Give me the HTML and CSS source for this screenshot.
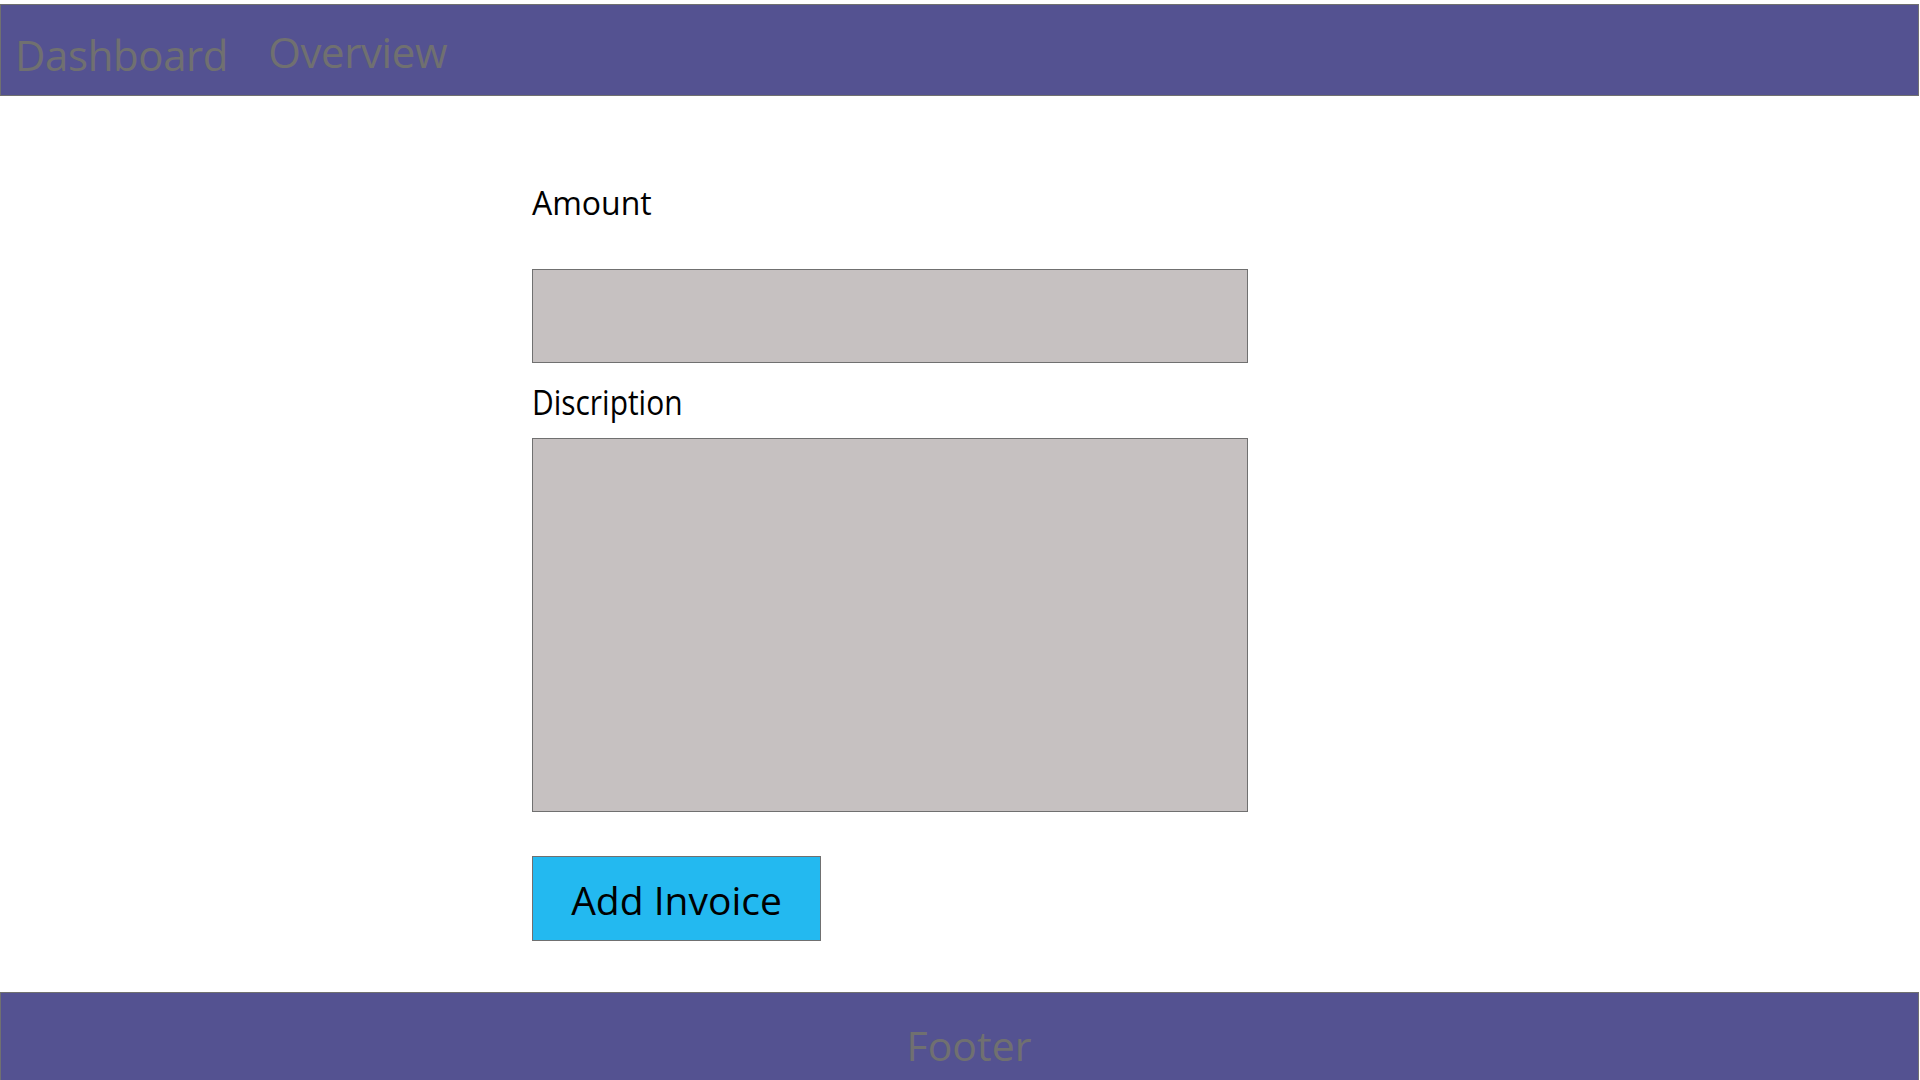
FILE: index.html
```html
<!DOCTYPE html>
<html lang="en">
<head>
<meta charset="utf-8">
<title>Add Invoice</title>
<link rel="stylesheet" href="styles.css">
</head>
<body>
<header class="topbar">
  <a class="nav-link nav-dashboard">Dashboard</a>
  <a class="nav-link nav-overview">Overview</a>
</header>
<main class="content">
  <form class="invoice-form">
    <label class="field-label label-amount">Amount</label>
    <div class="field field-amount"></div>
    <label class="field-label label-desc"><span class="narrow">Discription</span></label>
    <div class="field field-desc"></div>
    <button type="button" class="add-btn">Add Invoice</button>
  </form>
</main>
<footer class="footer">
  <span class="footer-text">Footer</span>
</footer>
</body>
</html>
```

FILE: styles.css
```css
html, body {
  margin: 0;
  padding: 0;
}
body {
  height: 1080px;
  overflow: hidden;
  display: flex;
  flex-direction: column;
  background: #ffffff;
  font-family: "Open Sans", "Noto Sans", sans-serif;
}
.topbar {
  margin-top: 4px;
  width: 1919px;
  height: 92px;
  box-sizing: border-box;
  border: 1px solid #707070;
  background: #545291;
  display: flex;
  align-items: flex-start;
  padding-left: 14px;
  flex-shrink: 0;
}
.nav-link {
  color: #707070;
  font-size: 42px;
  letter-spacing: -0.4px;
  line-height: normal;
  text-decoration: none;
}
.nav-dashboard {
  margin-top: 21px;
}
.nav-overview {
  margin-top: 18px;
  margin-left: 40px;
}
.content {
  flex: 1;
  padding-top: 85px;
  padding-left: 532px;
}
.invoice-form {
  display: flex;
  flex-direction: column;
  align-items: flex-start;
  width: 716px;
}
.field-label {
  color: #000000;
  display: block;
}
.label-amount {
  font-size: 32px;
  line-height: 44px;
}
.label-desc {
  font-size: 34px;
  line-height: 46px;
  margin-top: 16px;
}
.narrow {
  display: inline-block;
  transform: scaleX(0.88);
  transform-origin: left center;
}
.field {
  width: 716px;
  box-sizing: border-box;
  border: 1px solid #707070;
  background: #c6c1c1;
}
.field-amount {
  margin-top: 44px;
  height: 94px;
}
.field-desc {
  margin-top: 13px;
  height: 374px;
}
.add-btn {
  margin-top: 44px;
  width: 289px;
  height: 85px;
  box-sizing: border-box;
  border: 1px solid #707070;
  background: #23b9f0;
  color: #000000;
  font-family: "Open Sans", "Noto Sans", sans-serif;
  font-size: 39px;
  line-height: normal;
  padding: 2px 0 0 0;
  display: flex;
  align-items: center;
  justify-content: center;
  cursor: pointer;
}
.footer {
  flex-shrink: 0;
  width: 1919px;
  height: 88px;
  box-sizing: border-box;
  border: 1px solid #707070;
  border-bottom: none;
  background: #545291;
  display: flex;
  justify-content: center;
  align-items: flex-start;
  padding-top: 24px;
  padding-left: 19px;
}
.footer-text {
  color: #707070;
  font-size: 41px;
  line-height: normal;
}
```
